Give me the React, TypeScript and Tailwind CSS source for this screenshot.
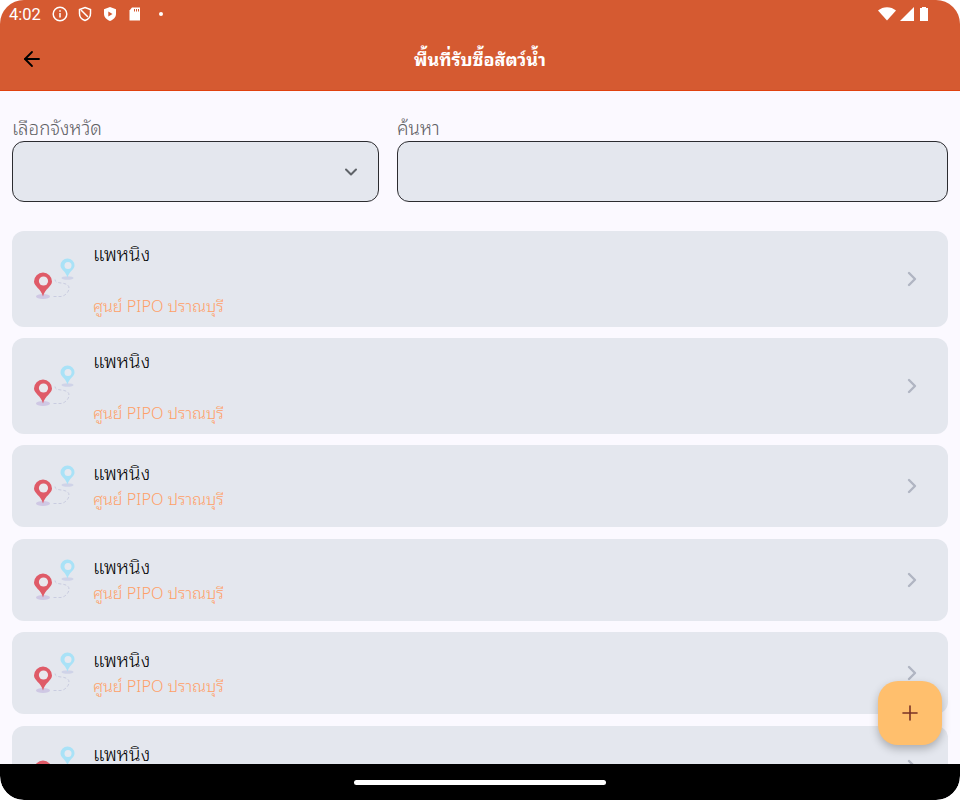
import { ArrowLeft, ChevronDown, ChevronRight, Plus } from "lucide-react";

const font = { fontFamily: '"Noto Sans Thai Looped", "Noto Sans", "Noto Sans Thai", "Liberation Sans", sans-serif' };

const cards = [
  { tall: true, mt: "" },
  { tall: true, mt: "mt-[11.5px]" },
  { tall: false, mt: "mt-[11.5px]" },
  { tall: false, mt: "mt-[11.5px]" },
  { tall: false, mt: "mt-[11.5px]" },
  { tall: false, mt: "mt-[11.5px]" },
];

const PinsIcon = () => (
  <svg width="46" height="44" viewBox="0 0 46 44" fill="none">
    <ellipse cx="11" cy="39.500" rx="7" ry="2.500" fill="#cfc8e4" />
    <ellipse cx="35.500" cy="21" rx="6" ry="1.800" fill="#cfd3e8" />
    <path d="M23 22.500c0 3 3 3 6 3.500 5 .5 8 2 8 5 0 4-4 8-8 8.500h-8" stroke="#c9cce0" strokeDasharray="3 2" strokeWidth="1" />
    <path d="M35.500 1.500a7 7 0 0 0-7 7c0 4 5.500 6 7 12 1.500-6 7-8 7-12a7 7 0 0 0-7-7z" fill="#a9e2f7" />
    <circle cx="36" cy="8.500" r="3.500" fill="#e6e9f0" />
    <path d="M11 15.500a9 9 0 0 0-9 9c0 5 7 7 9 15 2-8 9-10 9-15a9 9 0 0 0-9-9z" fill="#df5b68" />
    <circle cx="11.500" cy="24" r="4.600" fill="#e9e8ee" />
  </svg>
);

const Card = ({ tall, mt }: { tall: boolean; mt: string }) => (
  <div className={`${mt} flex shrink-0 items-center rounded-xl bg-[#e4e7ee] pl-5 pr-6 ${tall ? "h-[95.5px]" : "h-[82px]"}`}>
    <div className="flex w-[61px] shrink-0 items-center">
      <PinsIcon />
    </div>
    <div className={`flex h-full flex-1 flex-col ${tall ? "justify-between pb-[10px] pt-2" : "justify-center pb-[4px]"}`}>
      <div className="text-[19px] font-[350] leading-7 text-black">แพหนิง</div>
      <div className="text-[16.250px] font-[350] leading-6 text-[#ff9f68]">ศูนย์ PIPO ปราณบุรี</div>
    </div>
    <ChevronRight size={24} strokeWidth={2.400} className="text-[#b0b5c2]" />
  </div>
);

export default function App() {
  return (
    <div lang="th" className="h-[800px] w-[960px] overflow-hidden bg-white" style={font}>
      <div className="flex h-full flex-col overflow-hidden rounded-[24px] bg-[#fbf9ff]">
        <header className="h-[91px] shrink-0 border-b border-[#e0420f] bg-[#d55a31]">
          <div className="flex h-7 items-center px-[9px] text-white">
            <span className="pt-[2px] text-[16.500px]" style={{ fontFamily: "Roboto, sans-serif" }}>4:02</span>
            <div className="ml-[11px] flex items-center gap-[9px]">
              <svg width="16" height="16" viewBox="0 0 16 16" fill="none" stroke="white" strokeWidth="1.500">
                <circle cx="8" cy="8" r="6.800" />
                <path d="M8 7v4.500M8 4.200v1.500" />
              </svg>
              <svg width="16" height="16" viewBox="0 0 16 16" fill="none" stroke="white" strokeWidth="1.500">
                <path d="M8 1.500l5.500 2v4c0 3.500-2.500 6-5.500 7-3-1-5.500-3.500-5.500-7v-4z" />
                <path d="M4 4l7 7" />
              </svg>
              <svg width="16" height="16" viewBox="0 0 16 16">
                <path d="M8 1l6 2.200v4.500c0 3.500-2.600 6-6 7.300-3.400-1.300-6-3.800-6-7.300V3.200z" fill="white" />
                <path d="M6.300 5.500v5l4.200-2.500z" fill="#d55a31" />
              </svg>
              <svg width="16" height="16" viewBox="0 0 16 16">
                <path d="M5 1.500h8v13H2.500V4.500z" fill="white" />
                <path d="M7 3h1v2.500H7zM9 3h1v2.500H9zM11 3h1v2.500h-1z" fill="#d55a31" />
              </svg>
              <div className="ml-[7px] h-1 w-1 rounded-full bg-white" />
            </div>
            <div className="ml-auto mr-[21px] flex items-center gap-[3px]">
              <svg width="18" height="14" viewBox="0 0 18 14"><path d="M0 3.500C5-1 13-1 18 3.500L9 13.500z" fill="white" /></svg>
              <svg width="16" height="14" viewBox="0 0 16 14"><path d="M15 0v14H1z" fill="white" /></svg>
              <svg width="12" height="14" viewBox="0 0 12 14"><path d="M4 0h4v1h2v13H2V1h2z" fill="white" /></svg>
            </div>
          </div>
          <div className="relative flex h-[62px] items-center justify-center pb-[2px]">
            <ArrowLeft size={24} strokeWidth={1.800} className="absolute left-5 top-[19px] text-black" />
            <h1 className="text-[18px] font-bold text-white">พื้นที่รับซื้อสัตว์น้ำ</h1>
          </div>
        </header>

        <main className="relative min-h-0 flex-1 overflow-hidden px-3 pt-[26px]">
          <div className="flex gap-[18px]">
            <div className="w-[367px] shrink-0">
              <div className="h-6 text-[18.750px] font-[350] leading-5 text-[#5f5f64]">เลือกจังหวัด</div>
              <div className="flex h-[61px] items-center justify-end rounded-xl border border-[#2c2c30] bg-[#e4e7ee] pr-[17px]">
                <ChevronDown size={20} strokeWidth={2.400} className="text-[#5f6368]" />
              </div>
            </div>
            <div className="flex-1">
              <div className="h-6 text-[18.750px] font-[350] leading-5 text-[#5f5f64]">ค้นหา</div>
              <div className="h-[61px] rounded-xl border border-[#2c2c30] bg-[#e4e7ee]" />
            </div>
          </div>

          <div className="mt-[29px] flex flex-col">
            {cards.map((c, i) => (
              <Card key={i} tall={c.tall} mt={c.mt} />
            ))}
          </div>

          <button className="absolute bottom-[19px] right-[18px] flex h-[64px] w-[64px] items-center justify-center rounded-[20px] bg-[#ffbf6d] shadow-[0_4px_8px_rgba(0,0,0,0.25)]">
            <Plus size={24} strokeWidth={1.600} className="text-[#7a3326]" />
          </button>
        </main>

        <div className="flex h-9 shrink-0 items-center justify-center rounded-b-[24px] bg-black">
          <div className="h-[5px] w-[252px] rounded-full bg-white" />
        </div>
      </div>
    </div>
  );
}
